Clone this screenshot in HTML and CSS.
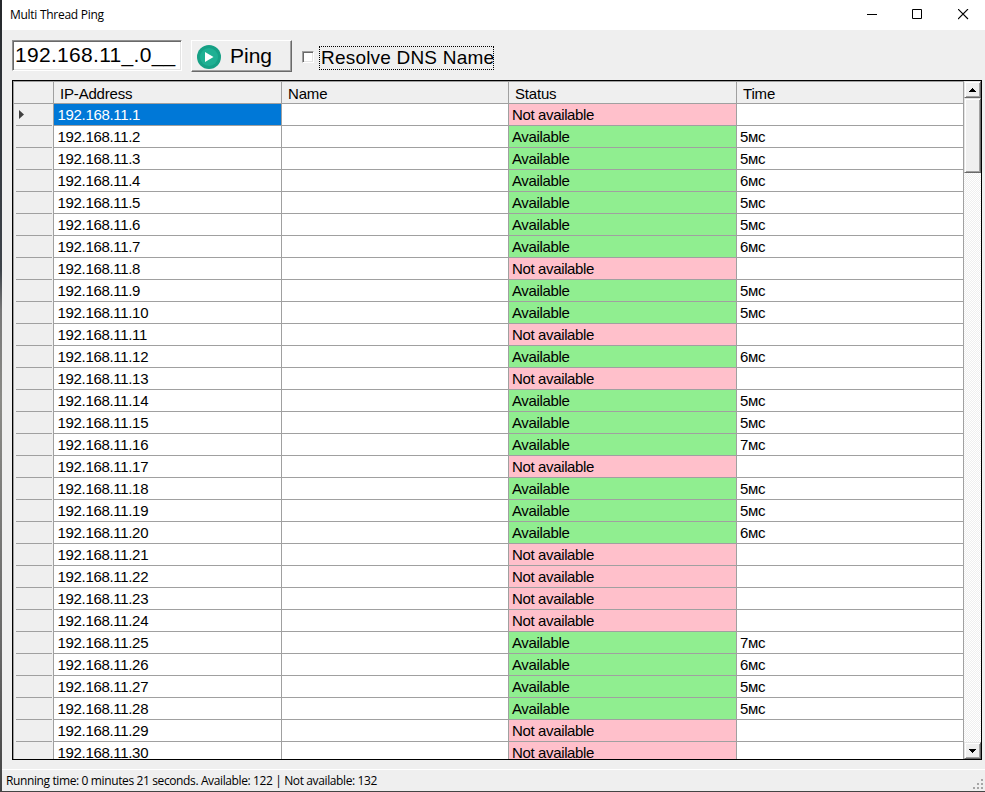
FILE: index.html
```html
<!DOCTYPE html>
<html lang="en">
<head>
<meta charset="utf-8">
<title>Multi Thread Ping</title>
<link rel="stylesheet" href="styles.css">
</head>
<body>
<div class="window">
  <header class="titlebar">
    <span class="title">Multi Thread Ping</span>
    <div class="controls">
      <svg width="11" height="11" viewBox="0 0 11 11"><path d="M1 5.500h10" stroke="#000"/></svg>
      <svg width="11" height="11" viewBox="0 0 11 11"><path d="M.5 .5h9v9h-9z" fill="none" stroke="#000"/></svg>
      <svg width="11" height="11" viewBox="0 0 11 11"><path d="M0 0l10 10M10 0l-10 10" stroke="#000" stroke-width="1.100"/></svg>
    </div>
  </header>
  <div class="toolbar">
    <div class="address"><span class="address-text">192.168.11_.0__</span></div>
    <div class="button">
      <svg width="24" height="24" viewBox="0 0 24 24"><circle cx="12" cy="12" r="12" fill="#16a085"/><circle cx="12" cy="12" r="9" fill="#1fb093"/><path d="M8 7v10l8.500-5z" fill="#fff"/></svg>
      <span class="button-text">Ping</span>
    </div>
    <div class="check"></div>
    <div class="check-label"><span class="check-text">Resolve DNS Name</span></div>
  </div>
  <div class="table">
    <div class="rows" id="rows">
      <div class="row head"><div class="stub"></div><div>IP-Address</div><div>Name</div><div>Status</div><div>Time</div></div>
    </div>
    <div class="scroll">
      <div class="arrow"><svg width="7" height="4" viewBox="0 0 7 4" shape-rendering="crispEdges"><path d="M3 0h1v1h1v1h1v1h1v1H0V3h1V2h1V1h1z"/></svg></div>
      <div class="thumb"></div>
      <div class="track"></div>
      <div class="arrow"><svg width="7" height="4" viewBox="0 0 7 4" shape-rendering="crispEdges"><path d="M0 0h7v1H6v1H5v1H4v1H3V3H2V2H1V1H0z"/></svg></div>
    </div>
  </div>
  <footer class="status">
    <span class="status-text">Running time: 0 minutes 21 seconds. Available: 122 | Not available: 132</span>
    <svg class="grip" width="11" height="11" viewBox="0 0 11 11" shape-rendering="crispEdges"><path fill="#a6a6a6" d="M8 0h2v2H8zM4 4h2v2H4zM8 4h2v2H8zM0 8h2v2H0zM4 8h2v2H4zM8 8h2v2H8z"/></svg>
  </footer>
</div>
<script src="app.js"></script>
</body>
</html>
```
FILE: styles.css
```css
*, *::after { box-sizing: border-box; }
body {
  margin: 0;
  height: 792px;
  overflow: hidden;
  padding: 0 0 1px 2px;
  background: linear-gradient(#25282b 0, #30343a 100px, #3c4249 270px, #777 310px, #8a8a86 400px, #666 650px, #444 792px);
  font-family: "Liberation Sans", Arial, sans-serif;
  color: #000;
}
.window { height: 791px; background: #efefef; display: flex; flex-direction: column; }
.titlebar {
  height: 30px;
  background: #fff;
  display: flex;
  justify-content: space-between;
  padding: 0 16px 0 8px;
  font: 12px/30px "Open Sans", "Noto Sans", sans-serif;
}
.title { letter-spacing: -.28px; white-space: nowrap; }
.controls { display: flex; gap: 35px; padding-top: 9px; }
.controls svg { display: block; }
.toolbar { height: 50px; display: flex; padding: 10px 0 0 10px; white-space: nowrap; }
.address {
  width: 170px;
  height: 31px;
  background: #fff;
  border: 1px solid;
  border-color: #909090 #fff #fff #909090;
  box-shadow: inset 1px 1px #696969, inset -1px -1px #e3e3e3;
  padding-left: 2px;
  font-size: 21px;
  line-height: 28px;
}
.address-text { letter-spacing: .3px; }
.button {
  width: 101px;
  height: 32px;
  margin-left: 9px;
  border: 1px solid;
  border-color: #fff #696969 #696969 #fff;
  box-shadow: inset -1px -1px #a0a0a0;
  display: flex;
  padding: 4px 0 0 5px;
  font-size: 21px;
}
.button-text { margin-left: 9px; line-height: 22px; }
.check {
  width: 12px;
  height: 12px;
  margin: 11px 5px 0 10px;
  background: #fff;
  border: 1px solid;
  border-color: #a0a0a0 #fff #fff #a0a0a0;
  box-shadow: inset 1px 1px #696969, inset -1px -1px #e3e3e3;
}
.check-label {
  width: 175px;
  height: 24px;
  margin-top: 6px;
  border: 1px dotted #000;
  padding-left: 1px;
  font-size: 19px;
  line-height: 22px;
}
.check-text { letter-spacing: .2px; }
.table {
  width: 970px;
  height: 680px;
  margin-left: 10px;
  border: 1px solid #000;
  display: flex;
  overflow: hidden;
}
.rows { flex: 1; height: 678px; overflow: hidden; border-left: 1px solid #a0a0a0; }
.row {
  height: 22px;
  display: grid;
  grid-template-columns: 40px 228px 227px 228px 227px;
  grid-template-rows: 100%;
  font-size: 15px;
  line-height: 22px;
  letter-spacing: -.36px;
  white-space: nowrap;
  background: #fff;
}
.row > div { border-right: 1px solid #a0a0a0; border-bottom: 1px solid #a0a0a0; padding-left: 3px; }
.row .stub { background: #efefef; padding: 0; position: relative; }
.row:not(.head) .stub { border-bottom: 0; }
.row:not(.head) .stub::after {
  content: "";
  display: block;
  height: 22px;
  margin: 0 1px 0 2px;
  border-bottom: 1px solid #a0a0a0;
}
.row .current { position: absolute; left: 5px; top: 6px; }
.row .host { padding-left: 3.5px; letter-spacing: -.32px; }
.row .selected { background: #0078d7; color: #fff; }
.row .up { background: #90ee90; }
.row .down { background: #ffc0cb; }
.row.head { height: 23px; background: #efefef; border-top: 1px solid #a0a0a0; line-height: 23px; letter-spacing: -.18px; }
.row.head > div { padding-left: 6px; }
.scroll { width: 17px; display: flex; flex-direction: column; background: #efefef; }
.arrow, .thumb {
  background: #efefef;
  border: 1px solid;
  border-color: #e3e3e3 #696969 #696969 #e3e3e3;
  box-shadow: inset 1px 1px #fff, inset -1px -1px #a0a0a0;
}
.arrow { height: 17px; display: flex; align-items: center; justify-content: center; }
.thumb { height: 75px; }
.track { flex: 1; background: repeating-conic-gradient(#fff 0 25%, #efefef 0 50%) 0 0 / 2px 2px; }
.status {
  height: 22px;
  margin-top: 9px;
  border-top: 1px solid #fff;
  display: flex;
  justify-content: space-between;
  padding-left: 4px;
  font: 12px/22px "Open Sans", "Noto Sans", sans-serif;
  white-space: nowrap;
}
.status-text { letter-spacing: -.38px; }
.grip { margin: 9px 1px 0 0; }
```
FILE: app.js
```js
// Reply time in milliseconds for each host; 0 means no reply.
const times = [0, 5, 5, 6, 5, 5, 6, 0, 5, 5, 0, 6, 0, 5, 5, 7, 0, 5, 5, 6, 0, 0, 0, 0, 7, 6, 5, 5, 0, 0];
const marker = '<svg class="current" width="5" height="9" viewBox="0 0 5 9"><path d="M0 0l5 4.500-5 4.500z" fill="#404040"/></svg>';

document.getElementById("rows").insertAdjacentHTML("beforeend", times.map((t, i) => `
  <div class="row">
    <div class="stub">${i === 0 ? marker : ""}</div>
    <div class="host${i === 0 ? " selected" : ""}">192.168.11.${i + 1}</div>
    <div></div>
    <div class="${t ? "up" : "down"}">${t ? "Available" : "Not available"}</div>
    <div>${t ? t + "мс" : ""}</div>
  </div>`).join(""));
```
